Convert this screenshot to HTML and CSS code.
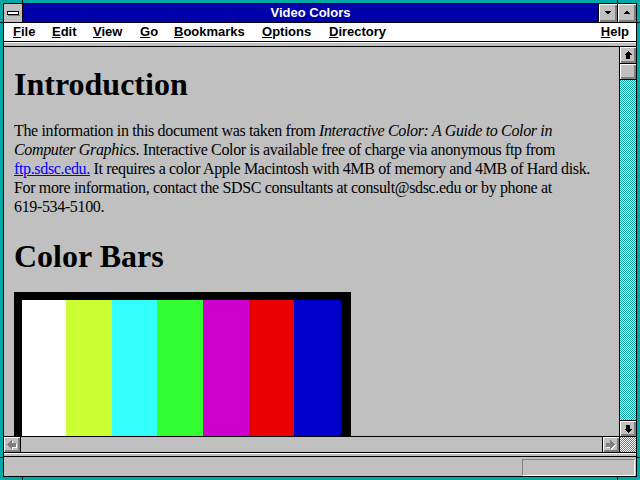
FILE: index.html
```html
<!DOCTYPE html>
<html>
<head>
<meta charset="utf-8">
<title>Video Colors</title>
<link rel="stylesheet" href="styles.css">
</head>
<body>
<div class="ticks">
  <span class="tick t-top-l"></span><span class="tick t-top-r"></span>
  <span class="tick t-bot-l"></span><span class="tick t-bot-r"></span>
  <span class="tick t-left-t"></span><span class="tick t-right-t"></span>
  <span class="tick t-left-b"></span><span class="tick t-right-b"></span>
</div>
<div class="window">
  <div class="titlebar">
    <div class="sysmenu">
      <svg width="18" height="18" viewBox="0 0 18 18" shape-rendering="crispEdges">
        <rect x="3" y="7" width="12" height="4" fill="#000"/>
        <rect x="4" y="8" width="10" height="2" fill="#fff"/>
        <rect x="4" y="11" width="12" height="1" fill="#808080"/>
      </svg>
    </div>
    <div class="title">Video Colors</div>
    <div class="tbtn">
      <svg width="18" height="18" viewBox="0 0 18 18" shape-rendering="crispEdges">
        <polygon points="5,7 12,7 8.5,10.5" fill="#000"/>
      </svg>
    </div>
    <div class="tbtn">
      <svg width="18" height="18" viewBox="0 0 18 18" shape-rendering="crispEdges">
        <polygon points="5,10 12,10 8.5,6.5" fill="#000"/>
      </svg>
    </div>
  </div>
  <div class="menubar">
    <span class="mi w-file"><u>F</u>ile</span>
    <span class="mi w-edit"><u>E</u>dit</span>
    <span class="mi w-view"><u>V</u>iew</span>
    <span class="mi w-go"><u>G</u>o</span>
    <span class="mi w-book"><u>B</u>ookmarks</span>
    <span class="mi w-opt"><u>O</u>ptions</span>
    <span class="mi w-dir"><u>D</u>irectory</span>
    <span class="mi help"><u>H</u>elp</span>
  </div>
  <div class="strip"></div>
  <div class="main">
    <div class="view-row">
      <div class="doc">
        <h1 class="heading first">Introduction</h1>
        <p class="para">The information in this document was taken from <i>Interactive Color: A Guide to Color in<br>Computer Graphics</i>. Interactive Color is available free of charge via anonymous ftp from<br><a class="link" href="#">ftp.sdsc.edu.</a> It requires a color Apple Macintosh with 4MB of memory and 4MB of Hard disk.<br>For more information, contact the SDSC consultants at consult@sdsc.edu or by phone at<br>619-534-5100.</p>
        <h2 class="heading second">Color Bars</h2>
        <div class="bars-frame">
          <div class="bars">
            <div class="bar b-white"></div>
            <div class="bar b-yellow"></div>
            <div class="bar b-cyan"></div>
            <div class="bar b-green"></div>
            <div class="bar b-magenta"></div>
            <div class="bar b-red"></div>
            <div class="bar b-blue"></div>
          </div>
        </div>
      </div>
      <div class="vscroll">
        <div class="sbtn up">
          <svg width="16" height="16" viewBox="0 0 16 16" shape-rendering="crispEdges">
            <polygon points="8,4 12,8 10,8 10,12 6,12 6,8 4,8" fill="#000"/>
          </svg>
        </div>
        <div class="thumb"></div>
        <div class="track">
          <svg class="dither" width="16" height="400">
            <defs>
              <pattern id="dith" width="2" height="2" patternUnits="userSpaceOnUse">
                <rect width="2" height="2" fill="#fff"/>
                <rect x="0" y="0" width="1" height="1" fill="#00a8a8"/>
                <rect x="1" y="1" width="1" height="1" fill="#00a8a8"/>
              </pattern>
            </defs>
            <rect width="16" height="400" fill="url(#dith)"/>
          </svg>
        </div>
        <div class="sbtn down">
          <svg width="16" height="15" viewBox="0 0 16 15" shape-rendering="crispEdges">
            <polygon points="8,12 12,8 10,8 10,4 6,4 6,8 4,8" fill="#000"/>
          </svg>
        </div>
      </div>
    </div>
    <div class="hscroll">
      <div class="sbtn left">
        <svg width="16" height="15" viewBox="0 0 16 15" shape-rendering="crispEdges">
          <polygon points="3,7.5 8,2.5 8,5.5 12,5.5 12,9.5 8,9.5 8,12.5" fill="#fff" transform="translate(1,1)"/>
          <polygon points="3,7.5 8,2.5 8,5.5 12,5.5 12,9.5 8,9.5 8,12.5" fill="#808080"/>
        </svg>
      </div>
      <div class="htrack"></div>
      <div class="sbtn right">
        <svg width="16" height="15" viewBox="0 0 16 15" shape-rendering="crispEdges">
          <polygon points="12,7.5 7,2.5 7,5.5 3,5.5 3,9.5 7,9.5 7,12.5" fill="#fff" transform="translate(1,1)"/>
          <polygon points="12,7.5 7,2.5 7,5.5 3,5.5 3,9.5 7,9.5 7,12.5" fill="#808080"/>
        </svg>
      </div>
      <div class="corner">
        <svg class="dither" width="16" height="15">
          <rect width="16" height="15" fill="url(#dith)"/>
        </svg>
      </div>
    </div>
  </div>
  <div class="strip bottom"></div>
  <div class="status">
    <div class="status-box"></div>
  </div>
</div>
</body>
</html>
```

FILE: styles.css
```css
html, body {
  margin: 0;
  padding: 0;
}
body {
  background: #00a8a8;
  width: 640px;
  height: 480px;
  overflow: hidden;
  position: relative;
  font-family: "Liberation Serif", "Times New Roman", serif;
}
.tick {
  position: absolute;
  background: #000;
}
.t-top-l { left: 22px; top: 0; width: 1px; height: 3px; }
.t-top-r { left: 617px; top: 0; width: 1px; height: 3px; }
.t-bot-l { left: 22px; top: 477px; width: 1px; height: 3px; }
.t-bot-r { left: 617px; top: 477px; width: 1px; height: 3px; }
.t-left-t { left: 0; top: 22px; width: 3px; height: 1px; }
.t-right-t { left: 637px; top: 22px; width: 3px; height: 1px; }
.t-left-b { left: 0; top: 457px; width: 3px; height: 1px; }
.t-right-b { left: 637px; top: 457px; width: 3px; height: 1px; }
.window {
  margin: 3px 3px 0 3px;
  width: 632px;
  height: 472px;
  border: 1px solid #000;
  background: #c0c0c0;
  display: flex;
  flex-direction: column;
}
.titlebar {
  height: 18px;
  display: flex;
  background: #0000a8;
  border-bottom: 1px solid #000;
}
.sysmenu {
  width: 18px;
  height: 18px;
  background: #c0c0c0;
  border-right: 1px solid #000;
}
.sysmenu svg, .tbtn svg, .sbtn svg, .dither { display: block; }
.title {
  flex: 1;
  text-align: center;
  color: #fff;
  font-family: "Liberation Sans", Arial, sans-serif;
  font-weight: bold;
  font-size: 13px;
  line-height: 18px;
}
.tbtn {
  width: 18px;
  height: 18px;
  border-left: 1px solid #000;
  background: #c0c0c0;
  box-shadow: inset 1px 1px 0 #fff, inset -1px -1px 0 #808080, inset -2px -2px 0 #808080;
}
.menubar {
  height: 18px;
  background: #fff;
  border-bottom: 1px solid #000;
  display: flex;
  padding-left: 9px;
  font-family: "Liberation Sans", Arial, sans-serif;
  font-weight: bold;
  font-size: 13px;
  line-height: 18px;
  color: #000;
}
.mi { display: block; white-space: nowrap; }
.w-file { width: 39px; }
.w-edit { width: 41px; }
.w-view { width: 47px; }
.w-go { width: 34px; }
.w-book { width: 88px; }
.w-opt { width: 67px; }
.w-dir { width: 60px; }
.help { margin-left: auto; margin-right: 7px; }
.strip {
  height: 3px;
  border-top: 1px solid #fff;
  border-bottom: 1px solid #000;
  background: #c0c0c0;
}
.strip.bottom {
  height: 2px;
}
.main {
  display: flex;
  flex-direction: column;
}
.view-row {
  height: 389px;
  display: flex;
}
.doc {
  flex: 1;
  overflow: hidden;
  padding-left: 10px;
  color: #000;
}
.heading {
  font-family: "Liberation Serif", "Times New Roman", serif;
  font-weight: bold;
  font-size: 32px;
  line-height: 36px;
  margin: 0;
}
.heading.first { margin-top: 19px; }
.heading.second { margin-top: 22px; }
.para {
  margin: 19px 0 0 0;
  white-space: nowrap;
  font-size: 16px;
  letter-spacing: -0.35px;
  line-height: 19px;
}
.link {
  color: #0000ff;
  text-decoration: underline;
}
.bars-frame {
  margin-top: 18px;
  width: 337px;
  height: 160px;
  background: #000;
  padding: 8px 10px 0 8px;
  box-sizing: border-box;
}
.bars {
  display: flex;
  height: 152px;
}
.bar { height: 100%; }
.b-white { width: 44px; background: #fff; }
.b-yellow { width: 46px; background: #ccff33; }
.b-cyan { width: 45px; background: #33ffff; }
.b-green { width: 46px; background: #33ff33; }
.b-magenta { width: 46px; background: #cc00cc; }
.b-red { width: 45px; background: #ea0000; }
.b-blue { width: 47px; background: #0000cc; }
.vscroll {
  width: 16px;
  border-left: 1px solid #000;
  display: flex;
  flex-direction: column;
}
.sbtn {
  width: 16px;
  height: 16px;
  background: #c0c0c0;
  box-shadow: inset 1px 1px 0 #fff, inset -1px -1px 0 #808080, inset -2px -2px 0 #808080;
  flex: none;
}
.sbtn.up { border-bottom: 1px solid #000; }
.sbtn.down { border-top: 1px solid #000; height: 15px; }
.thumb {
  height: 15px;
  background: #c0c0c0;
  border-bottom: 1px solid #000;
  box-shadow: inset 1px 1px 0 #fff, inset -1px -1px 0 #808080, inset -2px -2px 0 #808080;
  flex: none;
}
.track {
  flex: 1;
  overflow: hidden;
}
.hscroll {
  height: 15px;
  border-top: 1px solid #000;
  border-bottom: 1px solid #000;
  display: flex;
}
.sbtn.left { height: 15px; border-right: 1px solid #000; }
.sbtn.right { height: 15px; border-left: 1px solid #000; border-right: 1px solid #000; }
.htrack { flex: 1; background: #c0c0c0; }
.corner { width: 16px; overflow: hidden; }
.status {
  flex: 1;
  display: flex;
  justify-content: flex-end;
  align-items: flex-start;
  padding: 2px 1px 0 0;
}
.status-box {
  width: 111px;
  height: 15px;
  border-top: 1px solid #808080;
  border-left: 1px solid #808080;
  border-right: 1px solid #fff;
  border-bottom: 1px solid #fff;
}
```
